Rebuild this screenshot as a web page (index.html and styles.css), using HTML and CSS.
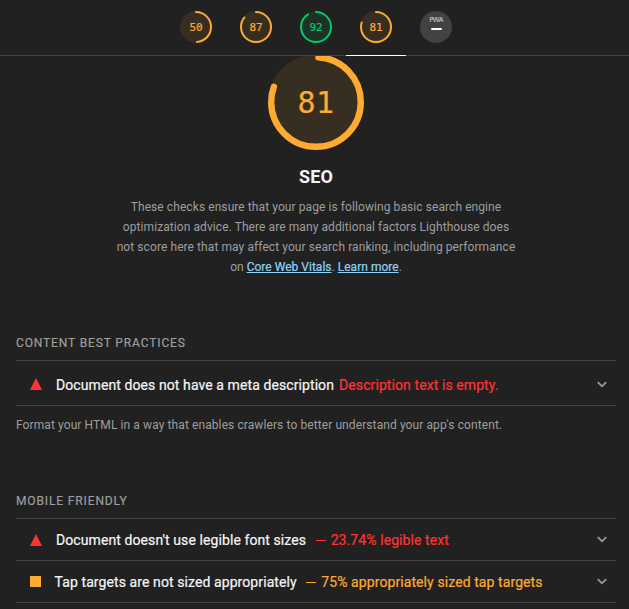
FILE: index.html
```html
<!DOCTYPE html>
<html lang="en">
<head>
<meta charset="utf-8">
<title>Lighthouse Report</title>
<link rel="stylesheet" href="styles.css">
</head>
<body>
<header class="topbar">
  <a class="score average"><svg viewBox="0 0 32 32"><circle class="base" cx="16" cy="16" r="16"/><circle class="arc" cx="16" cy="16" r="15" pathLength="100" stroke-dasharray="49 100"/></svg><span>50</span></a>
  <a class="score average"><svg viewBox="0 0 32 32"><circle class="base" cx="16" cy="16" r="16"/><circle class="arc" cx="16" cy="16" r="15" pathLength="100" stroke-dasharray="86 100"/></svg><span>87</span></a>
  <a class="score pass"><svg viewBox="0 0 32 32"><circle class="base" cx="16" cy="16" r="16"/><circle class="arc" cx="16" cy="16" r="15" pathLength="100" stroke-dasharray="91 100"/></svg><span>92</span></a>
  <a class="score average active"><svg viewBox="0 0 32 32"><circle class="base" cx="16" cy="16" r="16"/><circle class="arc" cx="16" cy="16" r="15" pathLength="100" stroke-dasharray="80 100"/></svg><span>81</span></a>
  <a class="pwa"><span class="pwa-name">PWA</span><span class="pwa-dash"></span></a>
</header>
<main>
  <section class="category">
    <div class="score large average"><svg viewBox="0 0 96 96"><circle class="base" cx="48" cy="48" r="47.5"/><circle class="arc" cx="48" cy="48" r="44.8" pathLength="100" stroke-dasharray="79.6 100" stroke-dashoffset="-.9"/></svg><span>81</span></div>
    <h1>SEO</h1>
    <p class="intro">These checks ensure that your page is following basic search engine<br>optimization advice. There are many additional factors Lighthouse does<br>not score here that may affect your search ranking, including performance<br><span class="links">on <a>Core Web Vitals</a>. <a>Learn more</a>.</span></p>
  </section>
  <section class="group content">
    <h2>CONTENT BEST PRACTICES</h2>
    <div class="audit tall fail">
      <svg class="mark" viewBox="0 0 12 12"><path d="M6 0l6 12H0z"/></svg>
      <span class="title">Document does not have a meta description</span>
      <span class="detail">Description text is empty.</span>
      <svg class="chevron" viewBox="0 0 10 7"><path d="M.8 1.2L5 5.4l4.2-4.2"/></svg>
    </div>
    <p class="note">Format your HTML in a way that enables crawlers to better understand your app's content.</p>
  </section>
  <section class="group mobile">
    <h2>MOBILE FRIENDLY</h2>
    <div class="audit first fail">
      <svg class="mark" viewBox="0 0 12 12"><path d="M6 0l6 12H0z"/></svg>
      <span class="title">Document doesn't use legible font sizes</span>
      <span class="detail measured"><i class="dash"></i>23.74% legible text</span>
      <svg class="chevron" viewBox="0 0 10 7"><path d="M.8 1.2L5 5.4l4.2-4.2"/></svg>
    </div>
    <div class="audit warn">
      <span class="mark square"></span>
      <span class="title">Tap targets are not sized appropriately</span>
      <span class="detail measured"><i class="dash"></i>75% appropriately sized tap targets</span>
      <svg class="chevron" viewBox="0 0 10 7"><path d="M.8 1.2L5 5.4l4.2-4.2"/></svg>
    </div>
  </section>
</main>
</body>
</html>
```
FILE: styles.css
```css
* { box-sizing: border-box; }
html, body { margin: 0; height: 609px; overflow: hidden; }
body {
  background: #212121;
  color: #f5f5f5;
  font: 14px/20px Roboto, "Liberation Sans", sans-serif;
}
h1, h2, p { margin: 0; }
.topbar {
  height: 56px;
  padding: 11px 0 0 180px;
  display: flex;
  gap: 28px;
  border-bottom: 1px solid #424242;
}
.score {
  position: relative;
  width: 32px;
  height: 32px;
  display: flex;
  align-items: center;
  justify-content: center;
}
.score svg {
  position: absolute;
  inset: 0;
  overflow: visible;
  transform: rotate(-90deg);
}
.score span {
  font: 11px/16px "DejaVu Sans Mono", monospace;
  -webkit-text-stroke: .2px currentColor;
  padding-top: 1px;
  z-index: 1;
}
.average { color: #fa3; }
.pass { color: #0c6; }
.base { fill: currentColor; opacity: .1; }
.arc { fill: none; stroke: currentColor; stroke-width: 2; stroke-linecap: round; }
.active::after {
  content: "";
  position: absolute;
  z-index: 2;
  left: -14px;
  top: 44px;
  width: 60px;
  height: 1px;
  background: #fff;
}
.pwa {
  width: 32px;
  height: 32px;
  border-radius: 50%;
  background: #424242;
  display: flex;
  flex-direction: column;
  align-items: center;
  padding-top: 5px;
}
.pwa-name {
  font: 600 7px/8px "Open Sans", sans-serif;
  letter-spacing: -.6px;
  color: #c4c4c4;
}
.pwa-dash { width: 11px; height: 2px; margin-top: 4px; background: #fff; border-radius: 1px; }
.category {
  display: flex;
  flex-direction: column;
  align-items: center;
  padding-left: 3px;
}
.large { width: 96px; height: 96px; margin-top: -2px; clip-path: inset(2px 0 0 0); }
.large .arc { stroke-width: 6.4; }
.large span { padding-top: 2px; font-size: 30px; line-height: 36px; letter-spacing: .4px; }
h1 { margin-top: 15px; font-size: 18px; line-height: 24px; font-weight: 700; letter-spacing: .1px; }
.intro {
  margin-top: 8px;
  text-align: center;
  white-space: nowrap;
  font-size: 12px;
  letter-spacing: .08px;
  color: #9e9e9e;
}
.links { letter-spacing: .02px; }
.intro a { color: #8ad4f8; text-decoration: underline; -webkit-text-stroke: .2px currentColor; }
.group { margin: 0 13px 0 16px; }
.content { padding-top: 56px; }
.mobile { padding-top: 56px; }
h2 {
  height: 27px;
  font-size: 12px;
  line-height: 20px;
  font-weight: 400;
  letter-spacing: .87px;
  color: #9e9e9e;
  -webkit-text-stroke: .2px currentColor;
}
.audit {
  height: 42px;
  display: flex;
  align-items: center;
  padding: 0 9px 0 14px;
  border-bottom: 1px solid #424242;
  white-space: nowrap;
  letter-spacing: .09px;
  -webkit-text-stroke: .2px currentColor;
}
.first { height: 43px; border-top: 1px solid #424242; }
.tall { height: 46px; border-top: 1px solid #424242; padding-top: 3px; }
.mark { width: 12px; height: 12px; margin-right: 14px; fill: #f33; }
.tall .mark { margin-top: -2px; }
.square { width: 11px; height: 11px; background: #fa3; margin-right: 13.6px; }
.detail { margin-left: 5px; }
.measured { margin-left: 9.5px; }
.dash { display: inline-block; width: 10px; height: 1px; margin-right: 5px; vertical-align: 4px; background: currentColor; }
.fail .detail { color: #f33; }
.warn .detail { color: #fa3; }
.chevron { width: 10px; height: 7px; margin-left: auto; fill: none; stroke: #9e9e9e; stroke-width: 1.7; }
.note { margin-top: 9px; font-size: 12px; letter-spacing: .095px; color: #9e9e9e; }
```
